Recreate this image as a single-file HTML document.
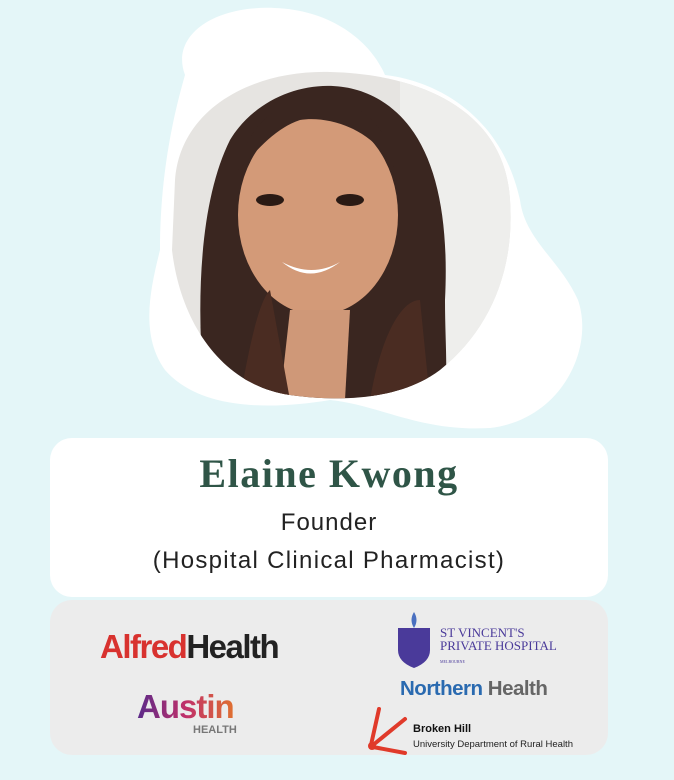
<!DOCTYPE html>
<html><head><meta charset="utf-8"><style>
body{margin:0;width:674px;height:780px;background:#e4f6f8;position:relative;overflow:hidden;font-family:"Liberation Sans",sans-serif}
.abs{position:absolute}
.card{left:50px;top:438px;width:558px;height:159px;background:#fff;border-radius:22px;text-align:center}
.logos{left:50px;top:600px;width:558px;height:155px;background:#ececec;border-radius:22px}
</style></head><body>
<svg class="abs" style="left:0;top:0" width="674" height="440">
<path d="M185 75 C170 35 215 5 275 8 C330 10 370 40 385 75 C430 80 500 110 520 200 C525 240 560 260 578 300 C595 350 560 420 490 428 C420 432 380 405 330 400 C270 410 200 410 165 370 C140 335 150 290 160 250 C160 170 175 110 185 75 Z" fill="#fff"/>
<defs><clipPath id="c"><path d="M175 180 C180 110 250 70 330 72 C420 74 505 110 510 200 C515 270 490 330 440 370 C400 400 340 402 290 395 C220 385 180 320 172 250 Z"/></clipPath></defs>
<g clip-path="url(#c)">
<rect x="160" y="60" width="360" height="350" fill="#e6e4e1"/>
<rect x="400" y="60" width="120" height="350" fill="#eeeeec"/>
<path d="M205 400 C195 300 200 200 230 140 C260 90 330 70 380 100 C430 130 450 200 445 300 C445 350 450 390 440 410 Z" fill="#3a2620"/>
<ellipse cx="318" cy="215" rx="80" ry="100" fill="#d39a78"/>
<path d="M238 170 C250 110 300 90 340 100 C370 110 395 140 400 180 C380 130 330 115 300 120 C270 130 250 160 238 170Z" fill="#3a2620"/>
<ellipse cx="270" cy="200" rx="14" ry="6" fill="#2a1a14"/>
<ellipse cx="350" cy="200" rx="14" ry="6" fill="#2a1a14"/>
<path d="M282 262 Q310 285 340 262 Q312 278 282 262Z" fill="#fff"/>
<path d="M290 310 L350 310 L345 400 L280 400Z" fill="#cf9878"/>
<path d="M240 400 C250 340 260 300 270 290 L290 400Z M370 400 C380 340 400 300 420 300 L430 400Z" fill="#4a2c22"/>
</g>
</svg>
<div class="abs card">
<div style="font-family:'Liberation Serif',serif;font-size:40px;font-weight:bold;color:#2f5547;margin-top:12px;letter-spacing:1.5px">Elaine Kwong</div>
<div style="font-size:24px;color:#222;margin-top:12px;letter-spacing:1px">Founder</div>
<div style="font-size:24px;color:#222;margin-top:10px;letter-spacing:1.3px">(Hospital Clinical Pharmacist)</div>
</div>
<div class="abs logos">
<div class="abs" style="left:50px;top:28px;font-size:33px;font-weight:bold;letter-spacing:-1.5px"><span style="color:#d8322f">Alfred</span><span style="color:#222">Health</span></div>
<div class="abs" style="left:87px;top:88px;font-size:33px;font-weight:bold;color:#8a2a7a;letter-spacing:-1px;background:linear-gradient(90deg,#5a2a8a,#c0306a,#e07030);-webkit-background-clip:text;background-clip:text;-webkit-text-fill-color:transparent">Austin</div>
<div class="abs" style="left:143px;top:124px;font-size:11px;font-weight:bold;color:#777">HEALTH</div>
<svg class="abs" style="left:345px;top:10px" width="40" height="60"><path d="M3 18 H35 V40 Q35 52 19 58 Q3 52 3 40Z" fill="#4a3a9a"/><path d="M19 2 Q14 10 19 18 Q24 10 19 2Z" fill="#4a70c0"/></svg>
<div class="abs" style="left:390px;top:26px;font-family:'Liberation Serif',serif;font-size:13px;color:#4a3a9a;line-height:13px">ST VINCENT'S<br>PRIVATE HOSPITAL<br><span style="font-size:4px">MELBOURNE</span></div>
<div class="abs" style="left:350px;top:77px;font-size:20.5px;font-weight:bold;letter-spacing:-0.5px"><span style="color:#2a6ab0">Northern</span><span style="color:#666"> Health</span></div>
<svg class="abs" style="left:315px;top:105px" width="50" height="50"><g stroke="#e03a2a" stroke-width="4" stroke-linecap="round"><line x1="6" y1="40" x2="14" y2="4"/><line x1="8" y1="40" x2="40" y2="14"/><line x1="8" y1="42" x2="40" y2="48"/></g><circle cx="7" cy="41" r="4" fill="#e03a2a"/></svg>
<div class="abs" style="left:363px;top:123px;font-size:11px;font-weight:bold;color:#111">Broken Hill</div>
<div class="abs" style="left:363px;top:139px;font-size:9.5px;color:#222">University Department of Rural Health</div>
</div>
</body></html>
